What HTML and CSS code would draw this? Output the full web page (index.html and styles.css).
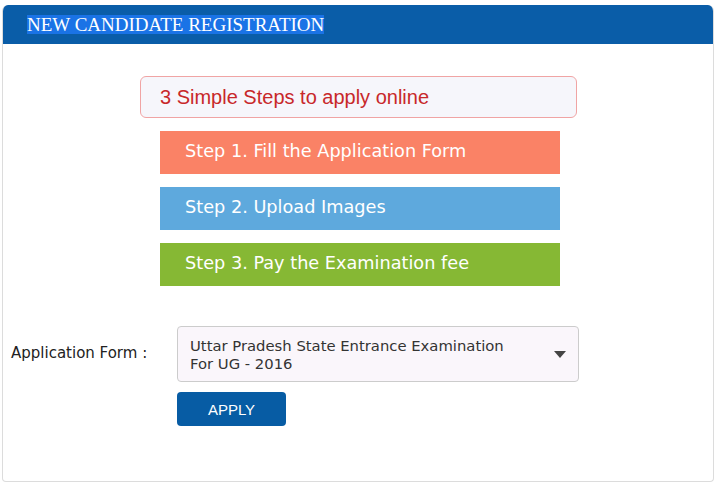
FILE: index.html
```html
<!DOCTYPE html>
<html lang="en">
<head>
    <meta charset="UTF-8">
    <meta name="viewport" content="width=device-width, initial-scale=1.0">
    <title>New Candidate Registration</title>
    <link rel="stylesheet" href="styles.css">
</head>
<body>
    <div class="panel">
        <div class="panel-head">
            <h1><span class="sel">NEW CANDIDATE REGISTRATION</span></h1>
        </div>

        <div class="panel-body">
            <div class="steps">
                <div class="steps-title">3 Simple Steps to apply online</div>
                <div class="step step-one">Step 1. Fill the Application Form</div>
                <div class="step step-two">Step 2. Upload Images</div>
                <div class="step step-three">Step 3. Pay the Examination fee</div>
            </div>

            <div class="form-row">
                <label class="form-label">Application Form :</label>
                <div class="form-field">
                    <div class="select">
                        <span>Uttar Pradesh State Entrance Examination<br>For UG - 2016</span>
                        <svg class="caret" width="12" height="7" viewBox="0 0 12 7"><path d="M0 0h12L6 7z" fill="#444"/></svg>
                    </div>
                    <button class="apply">APPLY</button>
                </div>
            </div>
        </div>
    </div>
</body>
</html>
```

FILE: styles.css
```css
body {
    margin: 0;
    background: #fff;
    font-family: "DejaVu Sans", Verdana, sans-serif;
}
.panel {
    margin: 5px 1px 0 2px;
    height: 477px;
    box-sizing: border-box;
    border: 1px solid #dcdcdc;
    border-top: none;
    border-radius: 6px 6px 4px 4px;
    overflow: hidden;
}
.panel-head {
    background: #0a5da8;
    height: 39px;
    padding-left: 24px;
    display: flex;
    align-items: center;
}
.panel-head h1 {
    margin: 0;
    font-family: "Liberation Serif", "Times New Roman", serif;
    font-weight: normal;
    font-size: 19px;
    line-height: 18px;
    color: #fff;
}
.sel {
    background: #1a73e6;
    display: inline-block;
    padding: 1px 0 0;
}
.panel-body {
    padding-top: 32px;
}
.steps {
    width: 437px;
    margin: 0 0 0 137px;
}
.steps-title {
    height: 40px;
    border: 1px solid #f0a4a4;
    border-radius: 6px;
    background: #f6f6fb;
    color: #c8282a;
    font-family: "Liberation Sans", Arial, sans-serif;
    font-size: 20px;
    padding-left: 19px;
    display: flex;
    align-items: center;
}
.step {
    width: 400px;
    height: 43px;
    margin: 13px 0 0 20px;
    box-sizing: border-box;
    padding: 0 0 4px 25px;
    color: #fff;
    font-size: 17.7px;
    display: flex;
    align-items: center;
}
.step-one { background: #fa8266; }
.step-two { background: #5ea9dd; }
.step-three { background: #86b834; }
.form-row {
    display: flex;
    align-items: flex-start;
    margin-top: 40px;
}
.form-label {
    width: 166px;
    padding-left: 8px;
    margin-top: 18px;
    font-size: 15px;
    color: #222;
}
.select {
    width: 402px;
    height: 56px;
    box-sizing: border-box;
    border: 1px solid #ccc;
    border-radius: 4px;
    background: #faf6fb;
    padding: 2px 12px 0 12px;
    display: flex;
    align-items: center;
    justify-content: space-between;
    font-size: 14.8px;
    line-height: 18px;
    color: #333;
}
.caret {
    margin-top: -2px;
}
.apply {
    display: block;
    margin-top: 10px;
    width: 109px;
    height: 34px;
    border: none;
    border-radius: 4px;
    background: #075ca4;
    color: #fff;
    font-family: "Liberation Sans", Arial, sans-serif;
    font-size: 15px;
}
```
